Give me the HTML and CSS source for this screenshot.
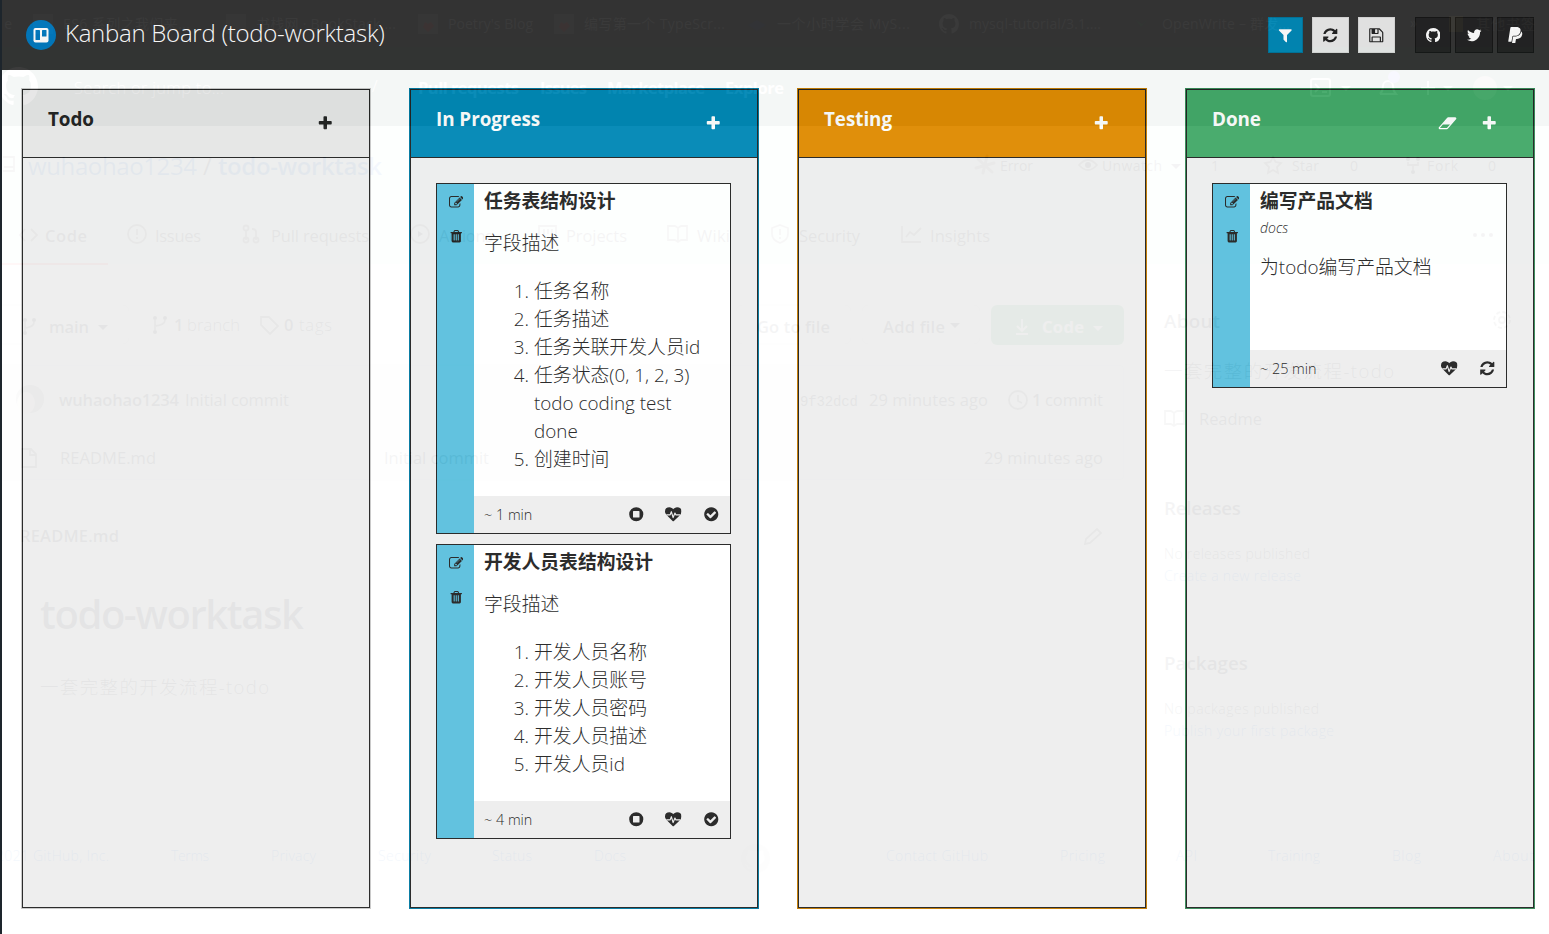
FILE: index.html
```html
<!DOCTYPE html>
<html lang="zh-CN">
<head>
<meta charset="utf-8">
<title>Kanban Board (todo-worktask)</title>
<link rel="stylesheet" href="styles.css">
</head>
<body>
<svg class="defs" width="0" height="0">
<symbol id="filter" viewBox="0 0 1792 1792"><path d="M1595 295q17 41-14 72l-493 493v742q0 42-39 59-13 5-25 5-27 0-45-19l-256-256q-19-19-19-45v-486l-493-493q-31-31-14-72 17-39 59-39h1280q42 0 59 39z"/></symbol>
<symbol id="refresh" viewBox="0 0 1792 1792"><path d="M1639 1056q0 5-1 7-64 268-268 434.5t-478 166.5q-146 0-282.500-55t-243.500-157l-129 129q-19 19-45 19t-45-19-19-45v-448q0-26 19-45t45-19h448q26 0 45 19t19 45-19 45l-137 137q71 66 161 102t187 36q134 0 250-65t186-179q11-17 53-117 8-23 30-23h192q13 0 22.500 9.500t9.500 22.500zm25-800v448q0 26-19 45t-45 19h-448q-26 0-45-19t-19-45 19-45l138-138q-148-137-349-137-134 0-250 65t-186 179q-11 17-53 117-8 23-30 23h-199q-13 0-22.500-9.500t-9.500-22.500v-7q65-268 270-434.500t480-166.500q146 0 284 55.500t245 156.500l130-129q19-19 45-19t45 19 19 45z"/></symbol>
<symbol id="save" viewBox="0 0 1792 1792"><path d="M512 1536h768v-384h-768v384zm896 0h128v-896q0-14-10-38.500t-20-34.500l-281-281q-10-10-34-20t-39-10v416q0 40-28 68t-68 28h-576q-40 0-68-28t-28-68v-416h-128v1280h128v-416q0-40 28-68t68-28h832q40 0 68 28t28 68v416zm-384-928v-320q0-13-9.500-22.500t-22.500-9.500h-192q-13 0-22.500 9.500t-9.500 22.500v320q0 13 9.500 22.500t22.500 9.500h192q13 0 22.500-9.500t9.500-22.500zm640 32v928q0 40-28 68t-68 28h-1344q-40 0-68-28t-28-68v-1344q0-40 28-68t68-28h928q40 0 88 20t76 48l280 280q28 28 48 76t20 88z"/></symbol>
<symbol id="github" viewBox="0 0 16 16"><path d="M8 0C3.58 0 0 3.58 0 8c0 3.54 2.29 6.53 5.47 7.59.4.07.55-.17.55-.38 0-.19-.01-.82-.01-1.490-2.010.37-2.530-.49-2.690-.94-.09-.23-.48-.94-.82-1.130-.28-.15-.68-.52-.01-.53.63-.01 1.080.58 1.230.82.72 1.210 1.870.87 2.330.66.07-.52.28-.87.51-1.070-1.780-.2-3.640-.89-3.640-3.950 0-.87.31-1.590.82-2.150-.08-.2-.36-1.020.08-2.120 0 0 .67-.21 2.200.82.64-.18 1.320-.27 2-.27s1.360.09 2 .27c1.530-1.040 2.200-.82 2.200-.82.44 1.100.16 1.920.08 2.120.51.56.82 1.270.82 2.150 0 3.070-1.870 3.750-3.650 3.950.29.25.54.73.54 1.480 0 1.070-.01 1.930-.01 2.200 0 .21.15.46.55.38A8.010 8.010 0 0 0 16 8c0-4.420-3.580-8-8-8z"/></symbol>
<symbol id="twitter" viewBox="0 0 1792 1792"><path d="M1684 408q-67 98-162 167 1 14 1 42 0 130-38 259.500t-115.500 248.500-184.500 210.500-258 146-323 54.500q-271 0-496-145 35 4 78 4 225 0 401-138-105-2-188-64.500t-114-159.500q33 5 61 5 43 0 85-11-112-23-185.500-111.500t-73.500-205.500v-4q68 38 146 41-66-44-105-115t-39-154q0-88 44-163 121 149 294.500 238.500t371.500 99.500q-8-38-8-74 0-134 94.500-228.500t228.500-94.500q140 0 236 102 109-21 205-78-37 115-142 178 93-10 186-50z"/></symbol>
<symbol id="paypal" viewBox="0 0 1792 1792"><path d="M1647 646q18 84-4 204-87 444-565 444h-44q-25 0-44 16.500t-24 42.500l-4 19-55 346-2 15q-5 26-24.500 42.500t-44.500 16.500h-251q-21 0-33-15t-9-36q9-56 26.500-168t26.500-168 27-167.500 27-167.500q5-37 43-37h131q133 2 236-21 175-39 287-144 102-95 155-246 24-70 35-133 1-6 2.500-7.500t3.500-1 6 3.500q79 59 98 162zm-172-282q0 107-46 236-80 233-302 315-113 40-252 42 0 1-90 1l-90-1q-100 0-118 96-2 8-85 530-1 10-12 10h-295q-22 0-36.500-16.500t-11.500-38.500l232-1471q5-29 27.500-48t51.500-19h598q34 0 97.500 13t111.500 32q107 41 163.500 123t56.500 196z"/></symbol>
<symbol id="plus" viewBox="0 0 1792 1792"><path d="M1600 736v192q0 40-28 68t-68 28h-416v416q0 40-28 68t-68 28h-192q-40 0-68-28t-28-68v-416h-416q-40 0-68-28t-28-68v-192q0-40 28-68t68-28h416v-416q0-40 28-68t68-28h192q40 0 68 28t28 68v416h416q40 0 68 28t28 68z"/></symbol>
<symbol id="eraser" viewBox="0 0 2048 1792"><path d="M960 1408l336-384h-768l-336 384h768zm1013-1077q15 34 9.500 71.500t-30.500 65.500l-896 1024q-38 44-96 44h-768q-38 0-69.500-20.500t-47.500-54.500q-15-34-9.500-71.500t30.500-65.500l896-1024q38-44 96-44h768q38 0 69.500 20.500t47.500 54.500z"/></symbol>
<symbol id="edit" viewBox="0 0 1792 1792"><path d="M888 1184l116-116-152-152-116 116v56h96v96h56zm440-720q-16-16-33 1l-350 350q-17 17-1 33t33-1l350-350q17-17 1-33zm80 594v190q0 119-84.500 203.500t-203.500 84.500h-832q-119 0-203.500-84.500t-84.500-203.500v-832q0-119 84.500-203.500t203.500-84.500h832q63 0 117 25 15 7 18 23 3 17-9 29l-49 49q-14 14-32 8-23-6-45-6h-832q-66 0-113 47t-47 113v832q0 66 47 113t113 47h832q66 0 113-47t47-113v-126q0-13 9-22l64-64q15-15 35-7t20 29zm-96-738l288 288-672 672h-288v-288zm444 132l-92 92-288-288 92-92q28-28 68-28t68 28l152 152q28 28 28 68t-28 68z"/></symbol>
<symbol id="trash" viewBox="0 0 1792 1792"><path d="M704 1376v-704q0-14-9-23t-23-9h-64q-14 0-23 9t-9 23v704q0 14 9 23t23 9h64q14 0 23-9t9-23zm256 0v-704q0-14-9-23t-23-9h-64q-14 0-23 9t-9 23v704q0 14 9 23t23 9h64q14 0 23-9t9-23zm256 0v-704q0-14-9-23t-23-9h-64q-14 0-23 9t-9 23v704q0 14 9 23t23 9h64q14 0 23-9t9-23zm-544-992h448l-48-117q-7-9-17-11h-317q-10 2-17 11zm928 32v64q0 14-9 23t-23 9h-96v948q0 83-47 143.500t-113 60.500h-832q-66 0-113-58.500t-47-141.500v-952h-96q-14 0-23-9t-9-23v-64q0-14 9-23t23-9h309l70-167q15-37 54-63t79-26h320q40 0 79 26t54 63l70 167h309q14 0 23 9t9 23z"/></symbol>
<symbol id="check" viewBox="0 0 1792 1792"><path d="M1412 734q0-28-18-46l-91-90q-19-19-45-19t-45 19l-408 407-226-226q-19-19-45-19t-45 19l-91 90q-18 18-18 46 0 27 18 45l362 362q19 19 45 19 27 0 46-19l543-543q18-18 18-45zm252 162q0 209-103 385.500t-279.500 279.500-385.500 103-385.500-103-279.500-279.500-103-385.500 103-385.500 279.500-279.500 385.500-103 385.500 103 279.500 279.500 103 385.500z"/></symbol>
<symbol id="stop" viewBox="0 0 1792 1792"><path fill-rule="evenodd" d="M896 128a768 768 0 1 0 0 1536 768 768 0 1 0 0-1536zM608 544h576q64 0 64 64v576q0 64-64 64h-576q-64 0-64-64v-576q0-64 64-64z"/></symbol>
<symbol id="heart" viewBox="0 0 1792 1792"><path d="M896 1664q-26 0-44-18l-624-602q-10-8-27.500-26t-55.500-65.500-68-97.500-53.500-121-23.500-138q0-220 127-344t351-124q62 0 126.500 21.500t120 58 95.500 68.500 76 68q36-36 76-68t95.500-68.500 120-58 126.500-21.500q224 0 351 124t127 344q0 221-229 450l-623 600q-18 18-44 18z"/><path d="M140 960H560L690 620L880 1260L1080 760L1170 960H1650" fill="none" stroke="#eee" stroke-width="125" stroke-linejoin="round"/></symbol>
</svg>

<header class="topbar">
  <svg class="logo" viewBox="0 0 30 30"><circle cx="15" cy="15" r="15" fill="#0079bf"/><rect x="7.500" y="8" width="15" height="14.500" rx="2" fill="#fff"/><rect x="9.500" y="10" width="4.500" height="10" rx=".6" fill="#0079bf"/><rect x="16" y="10" width="4.500" height="6.500" rx=".6" fill="#0079bf"/></svg>
  <h1 class="brand">Kanban Board (todo-worktask)</h1>
  <nav class="tools">
    <button class="btn btn-filter"><svg class="icon"><use href="#filter"/></svg></button>
    <button class="btn btn-light"><svg class="icon"><use href="#refresh"/></svg></button>
    <button class="btn btn-light btn-save"><svg class="icon"><use href="#save"/></svg></button>
    <button class="btn btn-dark btn-github"><svg class="icon icon-gh"><use href="#github"/></svg></button>
    <button class="btn btn-dark btn-twitter"><svg class="icon"><use href="#twitter"/></svg></button>
    <button class="btn btn-dark"><svg class="icon"><use href="#paypal"/></svg></button>
  </nav>
</header>

<main class="board">
  <section class="column todo">
    <div class="column-head"><h2>Todo</h2><div class="actions"><svg class="icon"><use href="#plus"/></svg></div></div>
    <div class="column-body"></div>
  </section>

  <section class="column progress">
    <div class="column-head"><h2>In Progress</h2><div class="actions"><svg class="icon"><use href="#plus"/></svg></div></div>
    <div class="column-body">
      <article class="card">
        <aside class="strip"><svg class="icon-s"><use href="#edit"/></svg><svg class="icon-s"><use href="#trash"/></svg></aside>
        <div class="card-main">
          <div class="content">
            <h3>任务表结构设计</h3>
            <p>字段描述</p>
            <ol><li>任务名称</li><li>任务描述</li><li>任务关联开发人员id</li><li>任务状态(0, 1, 2, 3) todo coding test done</li><li>创建时间</li></ol>
          </div>
          <footer><span>~ 1 min</span><svg class="icon"><use href="#stop"/></svg><svg class="icon"><use href="#heart"/></svg><svg class="icon"><use href="#check"/></svg></footer>
        </div>
      </article>
      <article class="card">
        <aside class="strip"><svg class="icon-s"><use href="#edit"/></svg><svg class="icon-s"><use href="#trash"/></svg></aside>
        <div class="card-main">
          <div class="content">
            <h3>开发人员表结构设计</h3>
            <p>字段描述</p>
            <ol><li>开发人员名称</li><li>开发人员账号</li><li>开发人员密码</li><li>开发人员描述</li><li>开发人员id</li></ol>
          </div>
          <footer><span>~ 4 min</span><svg class="icon"><use href="#stop"/></svg><svg class="icon"><use href="#heart"/></svg><svg class="icon"><use href="#check"/></svg></footer>
        </div>
      </article>
    </div>
  </section>

  <section class="column testing">
    <div class="column-head"><h2>Testing</h2><div class="actions"><svg class="icon"><use href="#plus"/></svg></div></div>
    <div class="column-body"></div>
  </section>

  <section class="column done">
    <div class="column-head"><h2>Done</h2><div class="actions"><svg class="icon icon-eraser"><use href="#eraser"/></svg><svg class="icon"><use href="#plus"/></svg></div></div>
    <div class="column-body">
      <article class="card">
        <aside class="strip"><svg class="icon-s"><use href="#edit"/></svg><svg class="icon-s"><use href="#trash"/></svg></aside>
        <div class="card-main">
          <div class="content">
            <h3>编写产品文档</h3>
            <div class="tag">docs</div>
            <p>为todo编写产品文档</p>
          </div>
          <footer><span>~ 25 min</span><svg class="icon"><use href="#heart"/></svg><svg class="icon"><use href="#refresh"/></svg></footer>
        </div>
      </article>
    </div>
  </section>
</main>

<!-- translucent page showing through the window -->
<svg class="ghost" width="1549" height="934" viewBox="0 0 1549 934" aria-hidden="true">
  <rect width="1549" height="934" fill="#fff"/>
  <rect y="126" width="1549" height="138" fill="#e6fff6"/>
  <rect width="1549" height="47" fill="#35363a"/>
  <rect y="47" width="1549" height="79" fill="#285841"/>
  <g class="g-bar">
    <text x="-12" y="29" textLength="24">me</text>
    <rect x="33" y="14" width="20" height="20" fill="#777"/><text x="63" y="29" textLength="127">ES6 系列之我们来...</text>
    <rect x="226" y="14" width="20" height="20" fill="#777"/><text x="256" y="29" textLength="140">书栈网 · BookStack ...</text>
    <rect x="418" y="14" width="20" height="20" fill="#888"/><path d="M428 32l-5-5 2-5 3 2 3-2 3 4z" fill="#e33"/><text x="448" y="29" textLength="85">Poetry's Blog</text>
    <rect x="554" y="14" width="20" height="20" fill="#888"/><path d="M564 32l-5-5 2-5 3 2 3-2 3 4z" fill="#e33"/><text x="584" y="29" textLength="141">编写第一个 TypeScr...</text>
    <path d="M748 25l9 6 9-6-9-5z" fill="#247"/><text x="777" y="29" textLength="133">一个小时学会 MyS...</text>
    <use href="#github" x="939" y="14" width="20" height="20"/><text x="969" y="29" textLength="132">mysql-tutorial/3.1....</text>
    <path d="M1135 19l6 8 7-8-6 5z" fill="#274"/><text x="1162" y="29" textLength="128">OpenWrite – 群发...</text>
    <text x="1410" y="28">»</text><rect x="1449" y="16" width="14" height="16" fill="#db6"/><text x="1476" y="29" textLength="59">其他书签</text>
  </g>
  <g class="g-nav">
    <use href="#github" x="-1" y="67" width="39" height="39"/>
    <text x="74" y="94" textLength="150" class="g-light">Search or jump to...</text><text x="372" y="92" class="g-light">/</text>
    <text x="418" y="94" textLength="101">Pull requests</text><text x="540" y="94" textLength="47">Issues</text><text x="607" y="94" textLength="98">Marketplace</text><text x="725" y="94" textLength="59">Explore</text>
    <g fill="none" stroke="#fff" stroke-width="2"><rect x="1311" y="79" width="19" height="17" rx="2"/><path d="M1315 84l4 4-4 4M1322 92h5M1380 94h16q-3-3-3-8a5 5 0 0 0-10 0q0 5-3 8M1421 88h14M1428 81v14"/></g>
    <path d="M1341 86h10l-5 5zM1443 86h10l-5 5zM1503 86h10l-5 5z"/><circle cx="1394" cy="77" r="6" fill="#77f"/><circle cx="1485" cy="88" r="12" fill="#a99"/>
  </g>
  <g class="g-repo">
    <path d="M3 157h11v14H3M4 167h10" class="g-line"/>
    <text x="28" y="175" textLength="169" class="g-title g-blue">wuhaohao1234</text><text x="203" y="175" class="g-title">/</text><text x="218" y="175" textLength="164" class="g-title g-blue g-med">todo-worktask</text>
    <path d="M978 159l14 13M976 168l18-5M987 156l-4 17" stroke="#888" stroke-width="3" stroke-linecap="round"/><text x="1000" y="171" textLength="33" class="g-s">Error</text>
    <path d="M1079 165q9-10 18 0-9 10-18 0z" class="g-line"/><circle cx="1088" cy="165" r="3"/><text x="1102" y="171" textLength="60" class="g-s">Unwatch</text><path d="M1171 164h10l-5 5z"/>
    <text x="1211" y="171" class="g-s">1</text><path d="M1273 157l2.500 5 5.500 1-4 4 1 6-5-3-5 3 1-6-4-4 5.500-1z" class="g-line"/><text x="1292" y="171" textLength="27" class="g-s">Star</text><text x="1350" y="171" class="g-s">0</text>
    <path d="M1408 162v3h10v-3M1413 165v5" class="g-line"/><circle cx="1408" cy="159" r="2"/><circle cx="1418" cy="159" r="2"/><circle cx="1413" cy="172" r="2"/><text x="1427" y="171" textLength="31" class="g-s">Fork</text><text x="1488" y="171" class="g-s">0</text>
    <path d="M25 229l-5 6 5 6M31 229l6 6-6 6" class="g-line"/><text x="45" y="242" textLength="42" class="g-med">Code</text>
    <circle cx="137" cy="234" r="9" class="g-line"/><path d="M137 229v6M137 237v2" class="g-line"/><text x="155" y="242" textLength="46">Issues</text>
    <path d="M246 230v10M256 240v-8q0-3-4-3" class="g-line"/><circle cx="246" cy="228" r="2.500" class="g-line"/><circle cx="246" cy="240" r="2.500" class="g-line"/><circle cx="256" cy="240" r="2.500" class="g-line"/><text x="271" y="242" textLength="98">Pull requests</text>
    <circle cx="420" cy="234" r="9" class="g-line"/><path d="M418 231l5 3-5 3z"/><text x="439" y="242" textLength="54">Actions</text>
    <path d="M539 226h17v15h-17zM544 229v9M548 229v5M552 229v7" class="g-line"/><text x="566" y="242" textLength="61">Projects</text>
    <path d="M668 226h7l3 2 3-2h6v14h-6l-3 2-3-2h-7zM678 228v13" class="g-line"/><text x="697" y="242" textLength="33">Wiki</text>
    <path d="M780 225l8 3v6q0 6-8 9-8-3-8-9v-6zM780 229v6M780 237v2" class="g-line"/><text x="799" y="242" textLength="61">Security</text>
    <path d="M902 226v16h19M906 237l4-5 4 3 7-7" class="g-line"/><text x="930" y="242" textLength="60">Insights</text>
    <circle cx="1475" cy="235" r="2"/><circle cx="1483" cy="235" r="2"/><circle cx="1491" cy="235" r="2"/>
    <path d="M2 264h106" stroke="#f66" stroke-width="2"/>
    <path d="M25 322v10M34 322q0 5-9 6" class="g-line"/><circle cx="25" cy="320" r="2"/><circle cx="34" cy="320" r="2"/><circle cx="25" cy="333" r="2"/><text x="49" y="333" textLength="40" class="g-med">main</text><path d="M98 325h10l-5 5z"/>
    <rect x="-10" y="305" width="139" height="39" rx="6" class="g-box"/>
    <path d="M155 320v10M165 320q0 5-10 6" class="g-line"/><circle cx="155" cy="318" r="2"/><circle cx="165" cy="318" r="2"/><circle cx="155" cy="332" r="2"/><text x="174" y="331" class="g-med">1</text><text x="187" y="331" textLength="53" class="g-light">branch</text>
    <path d="M261 317h8l9 9-8 8-9-9z" class="g-line"/><text x="284" y="331" class="g-med">0</text><text x="299" y="331" textLength="33" class="g-light">tags</text>
    <rect x="736" y="305" width="115" height="39" rx="6" class="g-box"/><rect x="862" y="305" width="118" height="39" rx="6" class="g-box"/>
    <text x="757" y="333" textLength="73" class="g-med">Go to file</text><text x="883" y="333" textLength="62" class="g-med">Add file</text><path d="M950 323h10l-5 5z"/>
    <rect x="991" y="305" width="133" height="40" rx="6" fill="#2ea44f" fill-opacity=".9"/><path d="M1022 319v11M1017 326l5 5 5-5M1016 334h12" class="g-line g-white"/><text x="1042" y="333" textLength="42" class="g-bold g-white-text">Code</text><path d="M1093 326h10l-5 5z" fill="#fff"/>
    <path d="M-10 365H1118q6 0 6 6v103q0 6-6 6H-10z" fill="#f4f6f8" stroke="#e1e4e8"/>
    <circle cx="30" cy="399" r="14" fill="#999"/><ellipse cx="26" cy="403" rx="9" ry="11" fill="#f2ebe5"/>
    <text x="59" y="406" textLength="120" class="g-med">wuhaohao1234</text><text x="185" y="406" textLength="104">Initial commit</text>
    <text x="800" y="406" textLength="58" class="g-mono">9f32dcd</text><text x="869" y="406" textLength="119">29 minutes ago</text><circle cx="1018" cy="400" r="9" class="g-line"/><path d="M1018 395v6l4 2" class="g-line"/><text x="1032" y="406" class="g-med">1</text><text x="1045" y="406" textLength="58">commit</text>
    <path d="M22 449h9l5 5v13H22zM30 449v6h6" class="g-line"/><text x="60" y="464" textLength="96">README.md</text><text x="384" y="464" textLength="105">Initial commit</text><text x="984" y="464" textLength="119">29 minutes ago</text>
    <text x="20" y="542" textLength="99" class="g-med">README.md</text><path d="M1085 544l1-5 11-10 4 4-11 10z" class="g-line"/>
    <text x="40" y="629" textLength="264" class="g-huge">todo-worktask</text><text x="40" y="694" textLength="229" class="g-l">一套完整的开发流程-todo</text>
    <text x="1164" y="328" textLength="56" class="g-h">About</text><circle cx="1502" cy="320" r="8" class="g-line" stroke-dasharray="4 2.300"/><circle cx="1502" cy="320" r="3" class="g-line"/><text x="1164" y="378" textLength="230" class="g-l">一套完整的开发流程-todo</text>
    <path d="M1165 411h6l3 2 3-2h7v13h-7l-3 2-3-2h-6zM1174 413v12" class="g-line"/><text x="1199" y="425" textLength="63">Readme</text>
    <text x="1164" y="515" textLength="77" class="g-h">Releases</text><text x="1164" y="559" textLength="146" class="g-s g-light">No releases published</text><text x="1164" y="581" textLength="137" class="g-s g-blue g-light">Create a new release</text>
    <text x="1164" y="670" textLength="84" class="g-h">Packages</text><text x="1164" y="714" textLength="155" class="g-s g-light">No packages published</text><text x="1164" y="736" textLength="170" class="g-s g-blue g-light">Publish your first package</text>
    <g class="g-foot"><text x="-4" y="861" textLength="113">2021 GitHub, Inc.</text><text x="171" y="861" textLength="38">Terms</text><text x="271" y="861" textLength="45">Privacy</text><text x="378" y="861" textLength="53">Security</text><text x="492" y="861" textLength="40">Status</text><text x="594" y="861" textLength="32">Docs</text><text x="886" y="861" textLength="102">Contact GitHub</text><text x="1060" y="861" textLength="45">Pricing</text><text x="1176" y="861" textLength="21">API</text><text x="1268" y="861" textLength="52">Training</text><text x="1392" y="861" textLength="29">Blog</text><text x="1493" y="861" textLength="41">About</text></g>
    <use href="#github" x="741" y="844" width="29" height="29" opacity=".15"/>
  </g>
</svg>
<div class="window-edge"></div>
</body>
</html>
```

FILE: styles.css
```css
* { box-sizing: border-box; }
body {
  margin: 0;
  height: 934px;
  overflow: hidden;
  position: relative;
  display: flex;
  flex-direction: column;
  background: #fff;
  color: #222;
  font-family: "Open Sans", "Noto Sans CJK SC", sans-serif;
  font-size: 18.85px;
}
h1, h2, h3, p, ol { margin: 0; }
.defs { position: absolute; }
.icon { width: 16.5px; height: 16.5px; fill: currentColor; display: block; flex: none; }
.icon-s { width: 14.5px; height: 14.5px; fill: currentColor; display: block; }
.icon-gh { width: 14.5px; height: 14.5px; }
.icon-eraser { width: 19px; margin-right: 24.5px; }

.topbar {
  height: 70px;
  flex: none;
  display: flex;
  align-items: center;
  padding: 0 15px 0 26px;
  background: #333;
}
.logo { width: 30px; height: 30px; }
.brand {
  margin: -5px 0 0 9px;
  font-size: 24px;
  font-weight: 300;
  line-height: 32px;
  letter-spacing: -.27px;
  color: #fff;
  white-space: nowrap;
}
.tools { display: flex; margin-left: auto; }
.btn {
  height: 36px;
  width: 37px;
  padding: 0;
  border: 1px solid #d8d8d8;
  display: flex;
  align-items: center;
  justify-content: center;
}
.btn-filter { width: 35px; margin-right: 9px; background: #0087b5; border-color: #00749c; color: #fff; }
.btn-light { background: #e9e9e9; color: #222; margin-right: 9px; }
.btn-save { margin-right: 20px; }
.btn-dark { background: #222; border-color: #151515; color: #fff; }
.btn-github { width: 36px; margin-right: 4px; }
.btn-twitter { width: 38px; margin-right: 4px; }

.board {
  flex: 1;
  display: grid;
  grid-template-columns: repeat(4, 350px);
  column-gap: 38px;
  padding: 18px 14px 25px 21px;
}
.column {
  display: flex;
  flex-direction: column;
  border: 1px solid var(--edge);
}
.todo { --edge: #c8c8c8; --head: #e6e6e6; --ink: #222; }
.progress { --edge: #0078a0; --head: #0087b5; --ink: #fff; }
.testing { --edge: #c47a00; --head: #e08a00; --ink: #fff; }
.done { --edge: #368a57; --head: #43a868; --ink: #fff; }
.column-head {
  height: 69px;
  display: flex;
  justify-content: space-between;
  padding: 15px 35.5px 0 25px;
  border: 1px solid #222;
  background: var(--head);
  color: var(--ink);
}
.column-head h2 { font-size: 18.85px; line-height: 28px; font-weight: 700; letter-spacing: -.05px; }
.actions { display: flex; padding-top: 9.5px; }
.column-body {
  flex: 1;
  display: flex;
  flex-direction: column;
  gap: 10px;
  padding: 25px 26px 0 25px;
  border: 1px solid #222;
  border-top: 0;
  background: #eee;
}
.card { display: flex; border: 1px solid #222; background: #fff; }
.strip {
  width: 37px;
  flex: none;
  display: flex;
  flex-direction: column;
  align-items: center;
  gap: 20px;
  padding: 10.5px 0 0 1px;
  background: #5bc0de;
}
.card-main { flex: 1; display: flex; flex-direction: column; }
.content { min-height: 166px; padding: 3px 12px 23px 10px; font-weight: 300; }
.content h3 { font-size: 18.8px; line-height: 28px; font-weight: 700; }
.content p { margin-top: 14px; line-height: 28px; }
.content ol { margin-top: 20px; padding-left: 50px; line-height: 28px; }
.tag { height: 24px; padding-top: 1px; font-size: 14px; font-style: italic; line-height: 24px; }
.card footer {
  height: 37px;
  display: flex;
  align-items: center;
  gap: 21.3px;
  padding: 0 10.3px 0 10px;
  background: #eee;
  font-size: 14.4px;
}
.card footer span { margin-right: auto; font-weight: 300; }

.ghost {
  position: absolute;
  left: 0;
  top: 0;
  opacity: .042;
  pointer-events: none;
  font-family: "Open Sans", "Noto Sans CJK SC", sans-serif;
  font-size: 16.5px;
}
.g-bar { fill: #ccc; font-size: 14px; }
.g-nav { fill: #fff; font-weight: 700; }
.g-repo { fill: #24292e; }
.g-line { fill: none; stroke: #666; stroke-width: 1.8; }
.g-white { stroke: #fff; }
.g-white-text { fill: #fff; }
.g-box { fill: none; stroke: #ddd; }
.g-title { font-size: 24px; }
.g-blue { fill: #0366d6; }
.g-bold { font-weight: 700; }
.g-med { font-weight: 600; }
.g-light { font-weight: 300; }
.g-s { font-size: 14px; }
.g-l { font-size: 18.5px; font-weight: 300; }
.g-h { font-size: 18.75px; font-weight: 600; }
.g-huge { font-size: 40px; font-weight: 600; }
.g-mono { font-family: "Liberation Mono", monospace; font-size: 14px; }
.g-foot { fill: #0366d6; font-size: 14px; font-weight: 300; }
.window-edge {
  position: absolute;
  left: 0;
  top: 0;
  width: 2px;
  height: 934px;
  background: #1d252c;
}
```
